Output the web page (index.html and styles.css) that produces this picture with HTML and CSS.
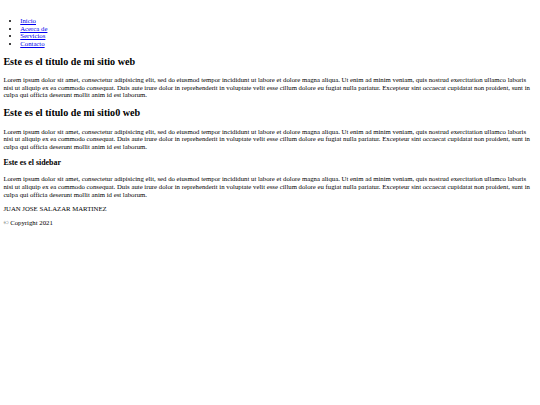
FILE: index.html
```html
<!DOCTYPE html>
<html lang="es">
<head>
<meta charset="utf-8">
<title>Mi sitio web</title>
<link rel="stylesheet" href="styles.css">
</head>
<body class="page">
<header class="header">
  <div class="logo"></div>
  <nav class="nav">
    <ul class="menu">
      <li><a href="#">Inicio</a></li>
      <li><a href="#">Acerca de</a></li>
      <li><a href="#">Servicios</a></li>
      <li><a href="#">Contacto</a></li>
    </ul>
  </nav>
</header>
<main class="main">
  <h2 class="title">Este es el título de mi sitio web</h2>
  <p class="text">Lorem ipsum dolor sit amet, consectetur adipisicing elit, sed do eiusmod tempor incididunt ut labore et dolore magna aliqua. Ut enim ad minim veniam, quis nostrud exercitation ullamco laboris nisi ut aliquip ex ea commodo consequat. Duis aute irure dolor in reprehenderit in voluptate velit esse cillum dolore eu fugiat nulla pariatur. Excepteur sint occaecat cupidatat non proident, sunt in culpa qui officia deserunt mollit anim id est laborum.</p>
  <h2 class="title">Este es el título de mi sitio0 web</h2>
  <p class="text">Lorem ipsum dolor sit amet, consectetur adipisicing elit, sed do eiusmod tempor incididunt ut labore et dolore magna aliqua. Ut enim ad minim veniam, quis nostrud exercitation ullamco laboris nisi ut aliquip ex ea commodo consequat. Duis aute irure dolor in reprehenderit in voluptate velit esse cillum dolore eu fugiat nulla pariatur. Excepteur sint occaecat cupidatat non proident, sunt in culpa qui officia deserunt mollit anim id est laborum.</p>
</main>
<aside class="sidebar">
  <h3 class="subtitle">Este es el sidebar</h3>
  <p class="text">Lorem ipsum dolor sit amet, consectetur adipisicing elit, sed do eiusmod tempor incididunt ut labore et dolore magna aliqua. Ut enim ad minim veniam, quis nostrud exercitation ullamco laboris nisi ut aliquip ex ea commodo consequat. Duis aute irure dolor in reprehenderit in voluptate velit esse cillum dolore eu fugiat nulla pariatur. Excepteur sint occaecat cupidatat non proident, sunt in culpa qui officia deserunt mollit anim id est laborum.</p>
</aside>
<footer class="footer">
  <p class="text">JUAN JOSE SALAZAR MARTINEZ</p>
  <p class="text">© Copyright 2021</p>
</footer>
</body>
</html>
```
FILE: styles.css
```css
html {
  background: #ffffff;
}
.page {
  margin: 3.375px;
  font-family: "Liberation Serif", "Times New Roman", serif;
  font-size: 6.75px;
  line-height: 7.594px;
  color: #000000;
}
.logo {
  height: 7.17px;
}
.menu {
  margin: 6.75px 0;
  padding-left: 16.875px;
  list-style: disc;
}
.menu a {
  color: #0000ee;
  text-decoration: underline;
}
.title {
  font-size: 10.125px;
  line-height: 11.8125px;
  font-weight: bold;
  margin: 8.4px 0;
}
.subtitle {
  font-size: 7.8975px;
  line-height: 9.28px;
  font-weight: bold;
  margin: 7.8975px 0;
}
.text {
  margin: 6.75px 0;
}
```
